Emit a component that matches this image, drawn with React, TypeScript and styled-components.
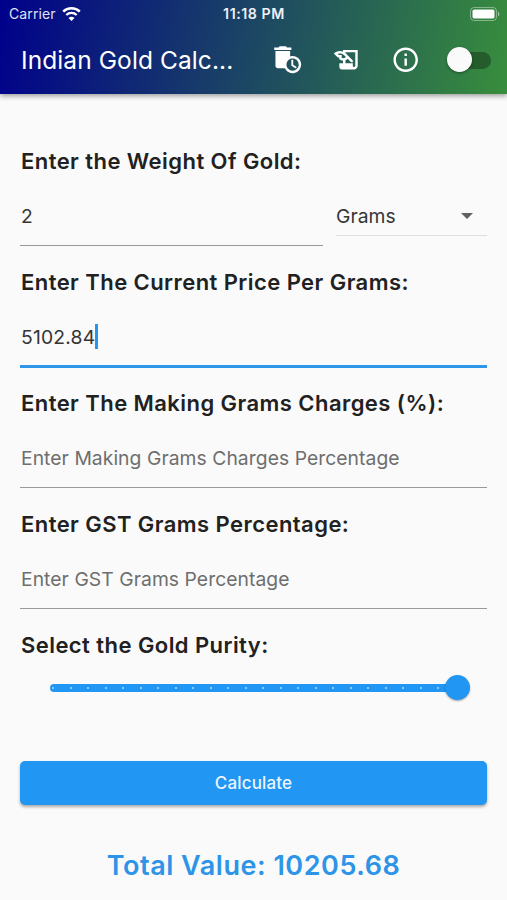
import React from "react";
import styled, { createGlobalStyle } from "styled-components";
import { MdAutoDelete, MdHistoryEdu, MdInfoOutline } from "react-icons/md";

const GlobalStyle = createGlobalStyle`
  * { box-sizing: border-box; }
  body {
    margin: 0;
    background: #fafafa;
    color: #212121;
    font-family: Inter, "Liberation Sans", sans-serif;
  }
`;

const Screen = styled.div`
  width: 507px;
  height: 900px;
  overflow: hidden;
  display: flex;
  flex-direction: column;
  background: #fafafa;
`;

const Header = styled.header`
  height: 94px;
  flex: none;
  color: #fff;
  background: linear-gradient(100.5deg, #00008b, #388e3c);
  box-shadow: 0 2px 5px rgba(0, 0, 0, 0.38);
`;

const StatusBar = styled.div`
  height: 28px;
  padding: 0 7px 0 9px;
  display: grid;
  grid-template-columns: 1fr auto 1fr;
  align-items: center;
  font-size: 14px;
  line-height: 28px;
`;

const Carrier = styled.div`
  display: flex;
  align-items: center;
  gap: 6px;
  letter-spacing: 0.1px;
  color: #dfe2f4;
`;

const Clock = styled.div`
  margin-right: 1px;
  font-size: 14.2px;
  font-weight: 600;
  letter-spacing: 0.55px;
  color: #eef0f8;
`;

const BatterySlot = styled.div`
  display: flex;
  justify-content: flex-end;
`;

const Toolbar = styled.div`
  height: 64px;
  padding: 0 16px 0 21px;
  display: flex;
  align-items: center;
`;

const Title = styled.h1`
  margin: 0;
  width: 251px;
  font-size: 24.5px;
  font-weight: 400;
  letter-spacing: 0.09px;
  line-height: 32px;
  white-space: nowrap;
`;

const IconButton = styled.button`
  width: 59px;
  height: 59px;
  padding: 0;
  border: 0;
  display: flex;
  align-items: center;
  justify-content: center;
  flex: none;
  color: #fff;
  background: none;
  svg { width: 29.4px; height: 29.4px; }
`;

const Actions = styled.div`
  margin-left: -14px;
  display: flex;
  align-items: center;
`;

const Switch = styled.div`
  width: 41px;
  height: 17px;
  margin-left: 15px;
  border-radius: 9px;
  background: #245c2c;
  display: flex;
  align-items: center;
`;

const SwitchKnob = styled.div`
  width: 25px;
  height: 25px;
  margin-left: -3px;
  margin-bottom: 1px;
  flex: none;
  border-radius: 50%;
  background: #fafafa;
  box-shadow: 0 1px 3px rgba(0, 0, 0, 0.4);
`;

const Form = styled.main`
  padding: 52px 20px 0;
  display: flex;
  flex-direction: column;
`;

const Field = styled.section`
  height: 121px;
`;

const Label = styled.h2`
  margin: 0;
  padding-left: 1px;
  height: 32px;
  line-height: 31px;
  font-size: 22px;
  font-weight: 600;
  letter-spacing: 0.44px;
  white-space: nowrap;
`;

const FieldRow = styled.div`
  display: grid;
  grid-template-columns: 303px 151px;
  column-gap: 13px;
  align-items: start;
`;

const TextBox = styled.div<{ $focused?: boolean; $hint?: boolean }>`
  height: ${(p) => (p.$focused ? 69 : 68)}px;
  padding: 22px 0 0 1px;
  border-bottom: ${(p) => (p.$focused ? "3px solid #2f96ea" : "1px solid #999")};
  display: flex;
  font-size: 19.3px;
  line-height: 32px;
  letter-spacing: ${(p) => (p.$hint ? 0.06 : 0.2)}px;
  color: ${(p) => (p.$hint ? "#6e6e6e" : "#353535")};
  white-space: nowrap;
`;

const Caret = styled.span`
  width: 2.5px;
  height: 25px;
  margin-top: 3px;
  background: #2196f3;
`;

const Dropdown = styled.div`
  height: 58px;
  padding: 22px 14px 0 0;
  border-bottom: 1px solid #dedede;
  display: flex;
  justify-content: space-between;
  font-size: 19.3px;
  line-height: 32px;
  letter-spacing: 0.05px;
  color: #353535;
`;

const Arrow = styled.span`
  margin-top: 13px;
  width: 0;
  height: 0;
  border-left: 6px solid transparent;
  border-right: 6px solid transparent;
  border-top: 6px solid #616161;
`;

const Slider = styled.div`
  height: 51px;
  padding: 0 17px 0 30px;
  display: flex;
  align-items: center;
`;

const Track = styled.div`
  flex: 1;
  height: 8px;
  padding-left: 2px;
  border-radius: 4px;
  background: #2196f3;
  display: flex;
  align-items: center;
  justify-content: space-between;
`;

const Tick = styled.span`
  width: 2px;
  height: 2px;
  border-radius: 1px;
  background: #b0dafb;
`;

const Thumb = styled.div`
  width: 25px;
  height: 25px;
  margin-left: -12px;
  flex: none;
  border-radius: 50%;
  background: #2196f3;
  box-shadow: 0 1px 2px rgba(0, 0, 0, 0.35);
`;

const CalculateButton = styled.button`
  height: 44px;
  margin: 48px 0 0;
  padding: 0;
  border: 0;
  border-radius: 5px;
  background: #2196f3;
  color: #e9f5fe;
  font: 500 17px/44px Inter, "Liberation Sans", sans-serif;
  letter-spacing: 0.15px;
  box-shadow: 0 2px 3px rgba(0, 0, 0, 0.32);
`;

const Total = styled.output`
  margin-top: 41px;
  text-align: center;
  font-size: 27px;
  font-weight: 600;
  line-height: 40px;
  letter-spacing: 0.53px;
  color: #2d94e8;
`;

const WifiIcon = () => (
  <svg width="19" height="15" viewBox="0 0 19 15" fill="none" stroke="#fff">
    <path d="M1.2 4.7C5.8.2 13.2.2 17.8 4.7" strokeWidth="2.5" />
    <path d="M4.3 8C7.2 5.2 11.8 5.2 14.7 8" strokeWidth="2.3" />
    <path d="M9.5 13.9 6.5 10.9C8.2 9.3 10.8 9.3 12.5 10.9Z" fill="#fff" stroke="none" />
  </svg>
);

const BatteryIcon = () => (
  <svg width="30" height="14" viewBox="0 0 30 14">
    <rect x="0.5" y="0.5" width="26" height="13" rx="3.5" fill="none" stroke="#fff" strokeOpacity="0.4" />
    <rect x="2.5" y="2.5" width="22" height="9" rx="1.8" fill="#fff" />
    <path d="M28 4.5C29.8 5.3 29.8 8.7 28 9.5Z" fill="#fff" fillOpacity="0.5" />
  </svg>
);

const TICKS = Array.from({ length: 24 }, (_, i) => i);

export default function App() {
  return (
    <Screen>
      <GlobalStyle />
      <Header>
        <StatusBar>
          <Carrier>Carrier<WifiIcon /></Carrier>
          <Clock>11:18 PM</Clock>
          <BatterySlot><BatteryIcon /></BatterySlot>
        </StatusBar>
        <Toolbar>
          <Title>Indian Gold Calc...</Title>
          <Actions>
            <IconButton aria-label="Clear history"><MdAutoDelete /></IconButton>
            <IconButton aria-label="History"><MdHistoryEdu /></IconButton>
            <IconButton aria-label="About"><MdInfoOutline /></IconButton>
            <Switch role="switch" aria-checked="false"><SwitchKnob /></Switch>
          </Actions>
        </Toolbar>
      </Header>
      <Form>
        <Field>
          <Label>Enter the Weight Of Gold:</Label>
          <FieldRow>
            <TextBox>2</TextBox>
            <Dropdown>Grams<Arrow /></Dropdown>
          </FieldRow>
        </Field>
        <Field>
          <Label>Enter The Current Price Per Grams:</Label>
          <TextBox $focused>5102.84<Caret /></TextBox>
        </Field>
        <Field>
          <Label>Enter The Making Grams Charges (%):</Label>
          <TextBox $hint>Enter Making Grams Charges Percentage</TextBox>
        </Field>
        <Field>
          <Label>Enter GST Grams Percentage:</Label>
          <TextBox $hint>Enter GST Grams Percentage</TextBox>
        </Field>
        <Label>Select the Gold Purity:</Label>
        <Slider>
          <Track>{TICKS.map((i) => <Tick key={i} />)}</Track>
          <Thumb />
        </Slider>
        <CalculateButton>Calculate</CalculateButton>
        <Total>Total Value: 10205.68</Total>
      </Form>
    </Screen>
  );
}
